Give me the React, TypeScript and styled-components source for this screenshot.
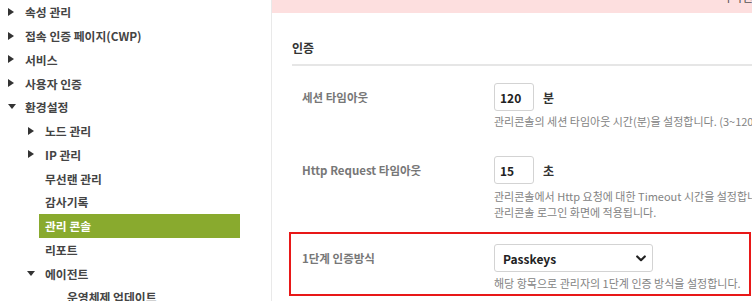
import React from "react";
import styled, { createGlobalStyle } from "styled-components";

const GlobalStyle = createGlobalStyle`
  html, body { margin: 0; padding: 0; background: #fff; }
  body { font-family: "Noto Sans CJK KR", "Noto Sans", sans-serif; }
  * { box-sizing: border-box; }
`;

const Page = styled.div`
  display: flex;
  width: 752px;
  height: 301px;
  overflow: hidden;
  background: #fff;
`;

const Sidebar = styled.nav`
  width: 271px;
  flex-shrink: 0;
  display: flex;
  flex-direction: column;
`;

const NavItem = styled.div<{ $level: number }>`
  display: flex;
  align-items: center;
  height: 23.75px;
  flex-shrink: 0;
  padding-left: ${(p) => (p.$level === 0 ? 8 : p.$level === 1 ? 28 : 50)}px;
  padding-right: 31px;
`;

const ArrowSlot = styled.span`
  width: 11px;
  flex-shrink: 0;
  display: flex;
  align-items: center;
`;

const ArrowRight = styled.span`
  width: 0;
  height: 0;
  border-top: 4px solid transparent;
  border-bottom: 4px solid transparent;
  border-left: 6px solid #333;
`;

const ArrowDown = styled.span<{ $shift: number }>`
  width: 0;
  height: 0;
  margin-left: ${(p) => p.$shift}px;
  border-left: 4px solid transparent;
  border-right: 4px solid transparent;
  border-top: 5px solid #333;
`;

const NavLabel = styled.span<{ $active?: boolean }>`
  flex: 1;
  height: 24px;
  display: flex;
  align-items: center;
  padding-left: 6px;
  font-size: 11.8px;
  font-weight: 700;
  white-space: nowrap;
  color: ${(p) => (p.$active ? "#fff" : "#444")};
  background: ${(p) => (p.$active ? "#89aa2e" : "transparent")};
`;

const Main = styled.main`
  flex: 1;
  min-width: 0;
  border-left: 1px solid #e9e9e9;
  display: flex;
  flex-direction: column;
`;

const Banner = styled.div`
  height: 13px;
  background: #fddfdf;
  padding-left: 448px;
  overflow: hidden;
  white-space: nowrap;
`;

const BannerText = styled.span`
  display: block;
  margin-top: -11px;
  font-size: 12px;
  line-height: 16px;
  color: #555;
`;

const Section = styled.section`
  padding-left: 20px;
  display: flex;
  flex-direction: column;
`;

const SectionTitle = styled.h2`
  margin: 27px 0 0;
  padding: 0 0 8px;
  font-size: 12px;
  line-height: 16px;
  font-weight: 700;
  color: #333;
  border-bottom: 2px solid #e6e6e6;
`;

const Row = styled.div<{ $top: number }>`
  display: grid;
  grid-template-columns: 202px 1fr;
  margin-top: ${(p) => p.$top}px;
`;

const Highlight = styled.div`
  margin: 12px 1px 0 -3px;
  padding: 10px 0 3px 1px;
  border: 2px solid #e81818;
`;

const Label = styled.div`
  height: 28px;
  display: flex;
  align-items: center;
  padding-left: 10px;
  font-size: 11.5px;
  font-weight: 700;
  color: #777;
  white-space: nowrap;
`;

const Field = styled.div`
  display: flex;
  flex-direction: column;
  min-width: 0;
`;

const Control = styled.div`
  display: flex;
  align-items: center;
  gap: 9px;
`;

const NumberBox = styled.div`
  width: 40px;
  height: 28px;
  border: 1px solid #d3d3d3;
  border-radius: 3px;
  display: flex;
  align-items: center;
  padding-left: 5px;
  font-size: 12px;
  font-weight: 700;
  color: #222;
`;

const Unit = styled.span`
  font-size: 12px;
  font-weight: 700;
  color: #333;
`;

const SelectBox = styled.div`
  width: 159px;
  height: 28px;
  border: 1px solid #d3d3d3;
  border-radius: 3px;
  display: flex;
  align-items: center;
  justify-content: space-between;
  padding: 0 6px 0 8px;
  font-size: 12px;
  font-weight: 700;
  color: #222;
`;

const Help = styled.p<{ $top: number }>`
  margin: ${(p) => p.$top}px 0 0;
  font-size: 11px;
  line-height: 16px;
  color: #838383;
  white-space: nowrap;
`;

const Chevron = () => (
  <svg width="10" height="7" viewBox="0 0 10 7" fill="none">
    <path d="M1.2 1.5 L5 5.2 L8.8 1.5" stroke="#222" strokeWidth="2.2" strokeLinecap="round" strokeLinejoin="round" />
  </svg>
);

type Nav = { label: string; level: number; arrow?: "right" | "down"; active?: boolean };

const navItems: Nav[] = [
  { label: "속성 관리", level: 0, arrow: "right" },
  { label: "접속 인증 페이지(CWP)", level: 0, arrow: "right" },
  { label: "서비스", level: 0, arrow: "right" },
  { label: "사용자 인증", level: 0, arrow: "right" },
  { label: "환경설정", level: 0, arrow: "down" },
  { label: "노드 관리", level: 1, arrow: "right" },
  { label: "IP 관리", level: 1, arrow: "right" },
  { label: "무선랜 관리", level: 1 },
  { label: "감사기록", level: 1 },
  { label: "관리 콘솔", level: 1, active: true },
  { label: "리포트", level: 1 },
  { label: "에이전트", level: 1, arrow: "down" },
  { label: "운영체제 업데이트", level: 2 },
];

export default function App() {
  return (
    <>
      <GlobalStyle />
      <Page>
        <Sidebar>
          {navItems.map((item) => (
            <NavItem key={item.label} $level={item.level}>
              <ArrowSlot>
                {item.arrow === "right" && <ArrowRight />}
                {item.arrow === "down" && <ArrowDown $shift={item.level === 1 ? -1 : 0} />}
              </ArrowSlot>
              <NavLabel $active={item.active}>{item.label}</NavLabel>
            </NavItem>
          ))}
        </Sidebar>
        <Main>
          <Banner>
            <BannerText>라이선스 티어는 무료입니다</BannerText>
          </Banner>
          <Section>
            <SectionTitle>인증</SectionTitle>
            <Row $top={17}>
              <Label>세션 타임아웃</Label>
              <Field>
                <Control>
                  <NumberBox>120</NumberBox>
                  <Unit>분</Unit>
                </Control>
                <Help $top={2}>관리콘솔의 세션 타임아웃 시간(분)을 설정합니다. (3~120분)</Help>
              </Field>
            </Row>
            <Row $top={27}>
              <Label>Http Request 타임아웃</Label>
              <Field>
                <Control>
                  <NumberBox>15</NumberBox>
                  <Unit>초</Unit>
                </Control>
                <Help $top={4}>
                  관리콘솔에서 Http 요청에 대한 Timeout 시간을 설정합니다.
                  <br />
                  관리콘솔 로그인 화면에 적용됩니다.
                </Help>
              </Field>
            </Row>
            <Highlight>
              <Row $top={0}>
                <Label>1단계 인증방식</Label>
                <Field>
                  <SelectBox>
                    <span>Passkeys</span>
                    <Chevron />
                  </SelectBox>
                  <Help $top={3}>해당 항목으로 관리자의 1단계 인증 방식을 설정합니다.</Help>
                </Field>
              </Row>
            </Highlight>
          </Section>
        </Main>
      </Page>
    </>
  );
}
